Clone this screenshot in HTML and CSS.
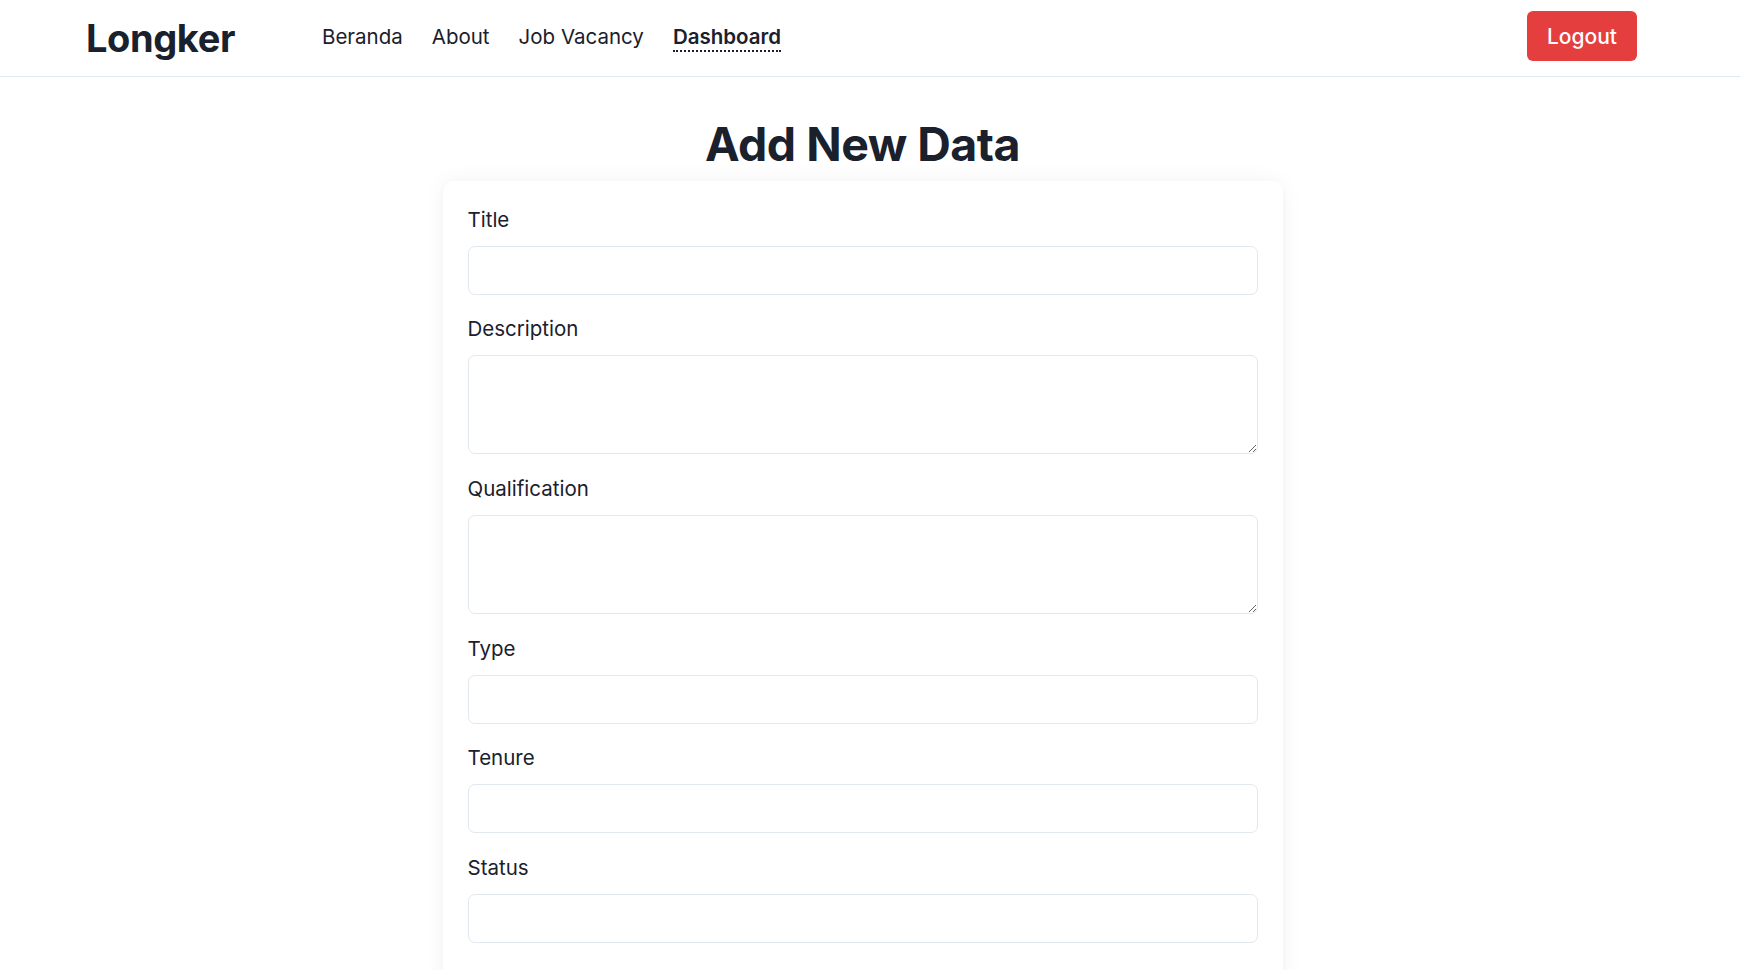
FILE: index.html
```html
<!DOCTYPE html>
<html lang="en">
<head>
<meta charset="utf-8">
<title>Longker - Add New Data</title>
<link rel="stylesheet" href="styles.css">
</head>
<body>
<header class="topbar">
  <a class="logo" href="#">Longker</a>
  <nav class="nav">
    <a href="#" class="nav-link">Beranda</a>
    <a href="#" class="nav-link">About</a>
    <a href="#" class="nav-link">Job Vacancy</a>
    <a href="#" class="nav-link active">Dashboard</a>
  </nav>
  <button class="logout" type="button">Logout</button>
</header>
<main class="main">
  <h1 class="page-title">Add New Data</h1>
  <form class="card">
    <div class="field">
      <label class="label" for="title">Title</label>
      <input class="input" id="title" type="text">
    </div>
    <div class="field">
      <label class="label" for="desc">Description</label>
      <textarea class="input textarea" id="desc"></textarea>
    </div>
    <div class="field">
      <label class="label" for="qual">Qualification</label>
      <textarea class="input textarea" id="qual"></textarea>
    </div>
    <div class="field">
      <label class="label" for="type">Type</label>
      <input class="input" id="type" type="text">
    </div>
    <div class="field">
      <label class="label" for="tenure">Tenure</label>
      <input class="input" id="tenure" type="text">
    </div>
    <div class="field">
      <label class="label" for="status">Status</label>
      <input class="input" id="status" type="text">
    </div>
  </form>
</main>
</body>
</html>
```
FILE: styles.css
```css
* { box-sizing: border-box; }
html, body { margin: 0; padding: 0; }
body {
  font-family: Inter, "Liberation Sans", sans-serif;
  color: #1a202c;
  background: #ffffff;
  padding-right: 15px;
}
.topbar {
  height: 77px;
  border-bottom: 1px solid #e2e8f0;
  margin-right: -15px;
  padding: 0 103px 0 86px;
  display: flex;
  align-items: center;
}
.logo {
  font-size: 38px;
  font-weight: 700;
  color: #1a202c;
  text-decoration: none;
  letter-spacing: -0.4px;
  line-height: 1;
}
.nav {
  display: flex;
  gap: 29px;
  margin-left: 87px;
  align-items: center;
}
.nav-link {
  font-size: 20.5px;
  color: #1a202c;
  text-decoration: none;
  line-height: 26px;
  border-bottom: 2px solid transparent;
}
.nav-link.active {
  font-weight: 600;
  border-bottom: 2px dotted #1a202c;
}
.logout {
  margin-left: auto;
  background: #e53e3e;
  color: #fff;
  border: none;
  border-radius: 6px;
  font-family: inherit;
  font-size: 21px;
  font-weight: 500;
  height: 50px;
  width: 110px;
  margin-top: -4px;
}
.main {
  padding-bottom: 40px;
}
.page-title {
  font-size: 46.5px;
  font-weight: 700;
  line-height: 1;
  text-align: center;
  margin: 44px 0 13px;
  letter-spacing: -0.5px;
}
.card {
  width: 840px;
  margin: 0 auto;
  background: #fff;
  border-radius: 10px;
  padding: 25px 25px 25px;
  box-shadow: 0 0 22px rgba(0, 0, 0, 0.05), 0 2px 6px rgba(0, 0, 0, 0.03);
}
.field {
  margin-bottom: 20.7px;
}
.label {
  display: block;
  font-size: 20.5px;
  line-height: 28px;
  margin-bottom: 12px;
}
.input {
  display: block;
  width: 100%;
  height: 49px;
  border: 1px solid #e2e8f0;
  border-radius: 7px;
  font-family: inherit;
  font-size: 18px;
  padding: 8px 12px;
  background: #fff;
}
.textarea {
  height: 99px;
  resize: vertical;
}
```
